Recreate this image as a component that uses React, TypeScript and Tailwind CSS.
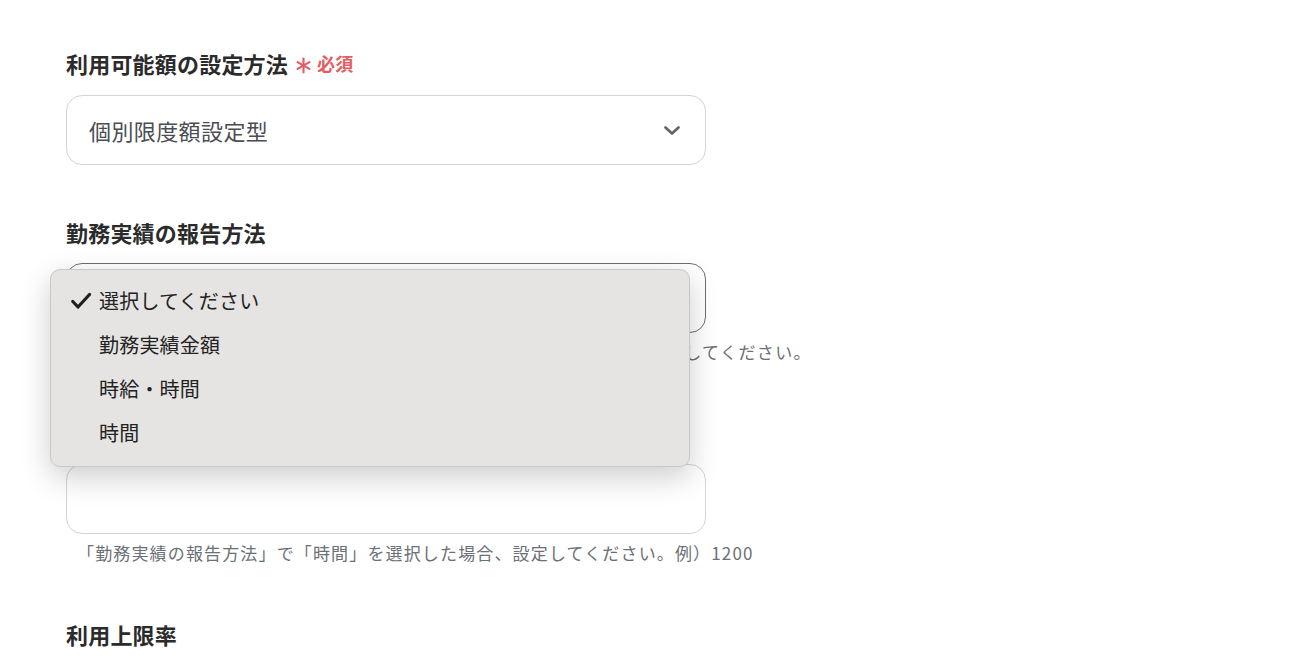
import React from "react";

const jp = { fontFamily: '"Noto Sans CJK JP", "Noto Sans", sans-serif' };

function Label({ children, className = "" }: { children: React.ReactNode; className?: string }) {
  return (
    <div className={`flex h-[32px] items-center pb-[4px] text-[22px] font-bold tracking-[0.2px] text-[#2b2b2b] ${className}`}>
      {children}
    </div>
  );
}

function Chevron() {
  return (
    <svg width="18" height="12" viewBox="0 0 18 12" className="text-[#666]">
      <path d="M2.5 3.5 L9 9.5 L15.5 3.5" fill="none" stroke="currentColor" strokeWidth="2.8" strokeLinecap="round" strokeLinejoin="round" />
    </svg>
  );
}

function Asterisk() {
  return (
    <svg width="17" height="17" viewBox="0 0 16 16" className="text-[#e35d62]">
      <g stroke="currentColor" strokeWidth="2" strokeLinecap="round">
        <path d="M8 1.5 V14.5" />
        <path d="M2.4 4.75 L13.6 11.25" />
        <path d="M2.4 11.25 L13.6 4.75" />
      </g>
    </svg>
  );
}

function Check() {
  return (
    <svg width="21" height="18" viewBox="0 0 21 18">
      <path d="M1.8 9.5 L7 15 L18.5 2.5" fill="none" stroke="#1f1f1f" strokeWidth="3.2" strokeLinecap="round" strokeLinejoin="round" />
    </svg>
  );
}

export default function App() {
  const items = ["選択してください", "勤務実績金額", "時給・時間", "時間"];
  return (
    <div className="relative h-[662px] w-[1298px] overflow-hidden bg-white" style={jp}>
      <div className="flex w-[706px] flex-col pl-[66px] pt-[49px]">
        <Label>
          <span>利用可能額の設定方法</span>
          <span className="ml-[7px] mt-[4px] flex items-center">
            <Asterisk />
          </span>
          <span className="ml-[5px] text-[18px] font-bold text-[#e35d62]">必須</span>
        </Label>
        <div className="mt-[14px] flex h-[70px] items-center justify-between rounded-[16px] border border-[#d4d4d8] pl-[22px] pr-[24px]">
          <span className="text-[22px] tracking-[0.4px] text-[#4a4d52]">個別限度額設定型</span>
          <Chevron />
        </div>

        <Label className="mt-[53px]">勤務実績の報告方法</Label>
        <div className="mt-[13px] h-[70px] rounded-[16px] border border-[#6e6e6e]" />
        <div className="mt-[7px] h-[24px] pl-[11px] text-[17px] leading-[24px] tracking-[1.4px] text-[#6b6f76] whitespace-nowrap">
          「利用可能額の設定方法」で「個別限度額設定型」を選択した場合、設定してください。
        </div>

        <Label className="mt-[55px]">時給</Label>
        <div className="mt-[13px] h-[70px] rounded-[16px] border border-[#d4d4d8]" />
        <div className="mt-[7px] h-[24px] pl-[11px] text-[17px] leading-[24px] tracking-[1.15px] text-[#6b6f76] whitespace-nowrap">
          「勤務実績の報告方法」で「時間」を選択した場合、設定してください。例）1200
        </div>

        <Label className="mt-[55px]">利用上限率</Label>
      </div>

      <div className="absolute left-[50px] top-[269px] w-[640px] rounded-[10px] border border-[#c9c8c6] bg-[#e5e4e2] pb-[11px] pt-[9px] shadow-[0_10px_30px_rgba(0,0,0,0.2)]">
        {items.map((t, i) => (
          <div key={t} className="flex h-[44px] items-center text-[20px] tracking-[0.2px] text-[#222]">
            <span className="flex w-[48px] justify-end pr-[7px]">{i === 0 ? <Check /> : null}</span>
            <span>{t}</span>
          </div>
        ))}
      </div>
    </div>
  );
}
